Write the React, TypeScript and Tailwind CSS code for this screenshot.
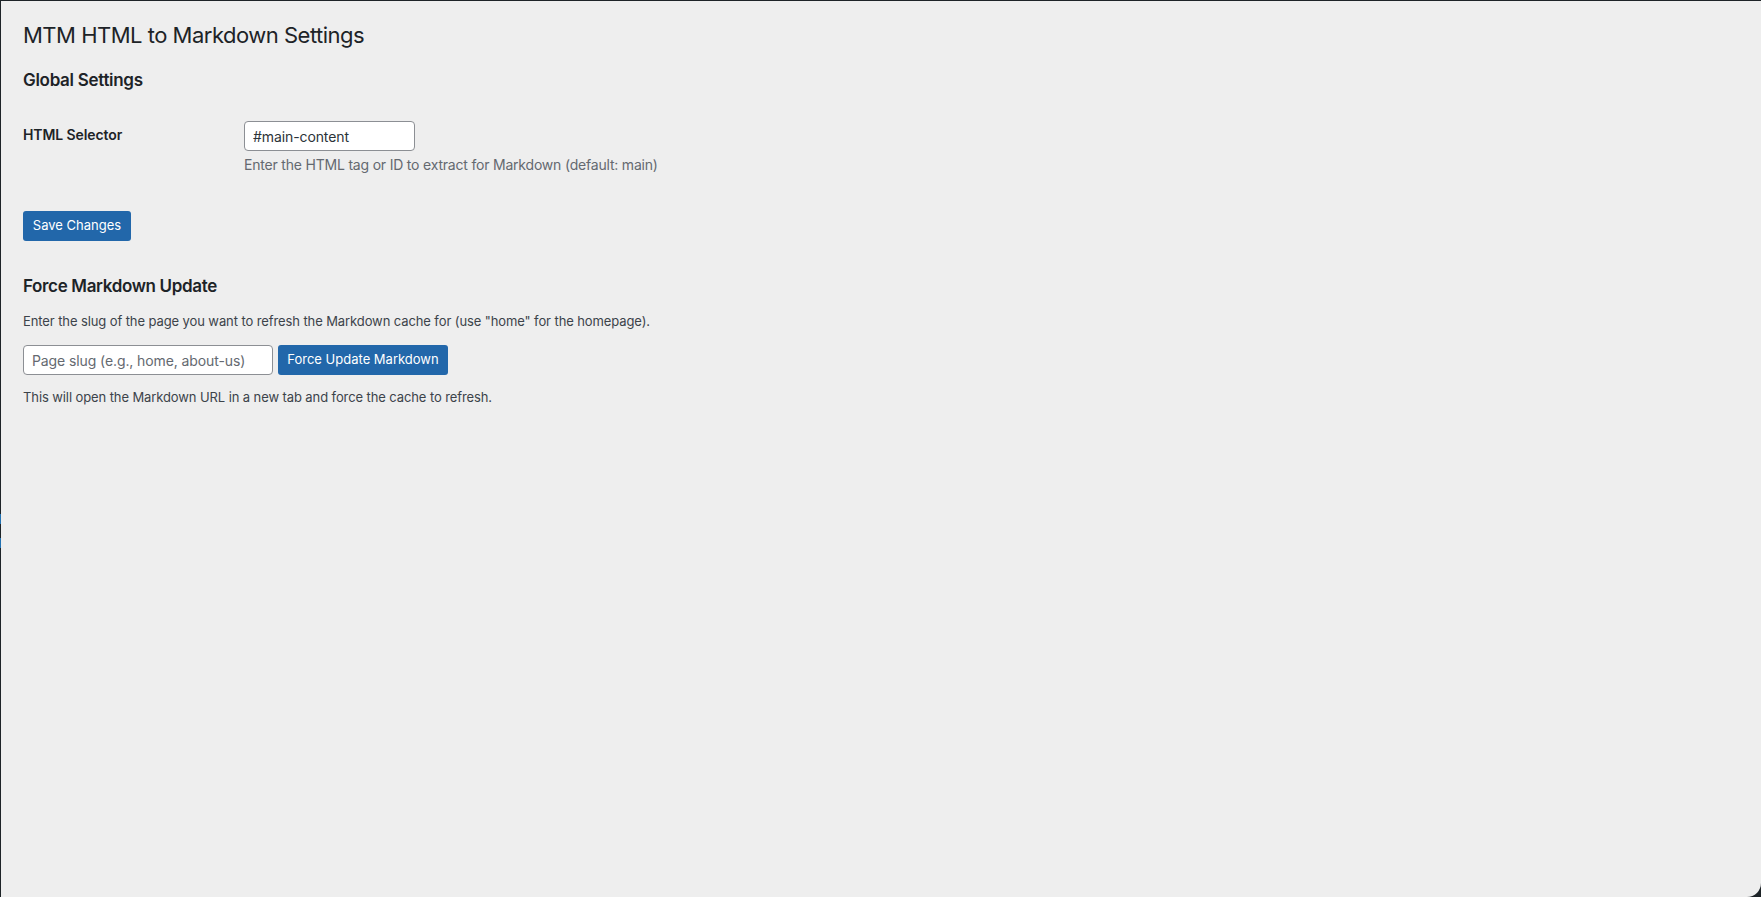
import React from 'react';

export default function App() {
  return (
    <div className="flex h-[897px] w-full overflow-hidden bg-[#1d2327] pt-px" style={{ fontFamily: 'Inter, "Noto Sans", sans-serif' }}>
      <div className="flex w-px flex-none flex-col">
        <div className="mt-[513px] h-[10px] bg-[#2271b1]" />
        <div className="mt-[14px] h-[10px] bg-[#2271b1]" />
      </div>
      <div className="flex-1 rounded-br-[14px] bg-[#eeeeee] pl-[22px] pt-[19px] text-[#3c434a]">
        <h1 className="text-[22px] font-normal leading-[30px] tracking-[-0.5px] text-[#1d2327]">MTM HTML to Markdown Settings</h1>

        <h2 className="mt-[18px] text-[17px] font-semibold leading-[24px] tracking-[-0.3px] text-[#1d2327]">Global Settings</h2>

        <div className="mt-[29px] flex">
          <div className="w-[221px] flex-none pt-[5px] text-[14px] font-semibold leading-[18px] tracking-[-0.1px] text-[#1d2327]">
            HTML Selector
          </div>
          <div>
            <input
              type="text"
              defaultValue="#main-content"
              className="h-[30px] w-[171px] rounded-[4px] border border-[#8c8f94] bg-white px-[8px] text-[14px] tracking-[-0.1px] text-[#2c3338] outline-none"
            />
            <p className="mt-[4px] text-[14px] leading-[20px] tracking-[-0.2px] text-[#646970]">
              Enter the HTML tag or ID to extract for Markdown (default: main)
            </p>
          </div>
        </div>

        <button className="mt-[36px] h-[30px] w-[108px] rounded-[3px] bg-[#2267aa] text-[13px] text-white">
          Save Changes
        </button>

        <h2 className="mt-[33px] text-[17px] font-semibold leading-[24px] tracking-[-0.35px] text-[#1d2327]">Force Markdown Update</h2>

        <p className="mt-[14px] text-[13px] leading-[18px] tracking-[-0.1px]">
          Enter the slug of the page you want to refresh the Markdown cache for (use "home" for the homepage).
        </p>

        <div className="mt-[15px] flex gap-[5px]">
          <input
            type="text"
            placeholder="Page slug (e.g., home, about-us)"
            className="h-[30px] w-[250px] rounded-[4px] border border-[#8c8f94] bg-white px-[8px] text-[14px] tracking-[-0.1px] text-[#2c3338] outline-none placeholder:text-[#646970]"
          />
          <button className="h-[30px] w-[170px] rounded-[3px] bg-[#2267aa] text-[13px] text-white">
            Force Update Markdown
          </button>
        </div>

        <p className="mt-[13px] text-[13px] leading-[18px] tracking-[-0.1px]">
          This will open the Markdown URL in a new tab and force the cache to refresh.
        </p>
      </div>
    </div>
  );
}
